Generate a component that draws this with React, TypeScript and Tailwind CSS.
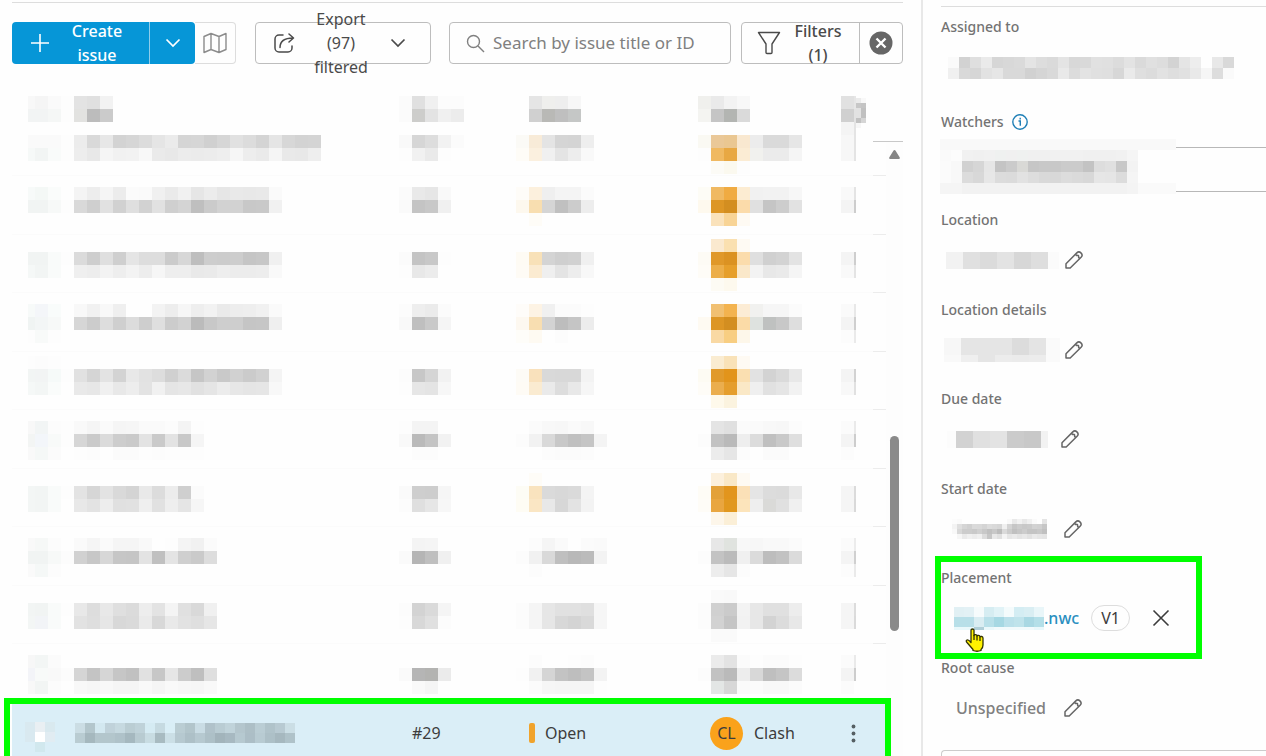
import type { ReactNode } from 'react';

interface MosaicProps {
  bands: string[];
  size?: number;
  clipLeft?: number;
  maxWidth?: number;
  maxHeight?: number;
  offset?: number;
  className?: string;
}

// Each band is a list of cells: two hex digits is a gray, six is a full colour, "-" is empty.
function Mosaic({ bands, size = 13, clipLeft = 0, maxWidth = 9999, maxHeight = 9999, offset = 0, className = '' }: MosaicProps) {
  const rows = bands.map((b) => b.split(' '));
  const width = Math.min(maxWidth, Math.max(...rows.map((r) => r.length)) * size - clipLeft);
  const height = Math.min(maxHeight, rows.length * size);
  return (
    <svg width={width} height={height} aria-hidden="true" shapeRendering="crispEdges" className={`block shrink-0 overflow-visible ${className}`}>
      {rows.map((cells, r) =>
        cells.map((c, i) => {
          if (c === '-') return null;
          const x = Math.max(0, i * size - clipLeft);
          const end = Math.min(width, (i + 1) * size - clipLeft);
          const y = r * size;
          return (
            <rect
              key={`${r}-${i}`}
              x={x}
              y={y + offset}
              width={Math.max(0, end - x)}
              height={Math.min(size, height - y)}
              fill={c.length === 2 ? `#${c}${c}${c}` : `#${c}`}
            />
          );
        })
      )}
    </svg>
  );
}

interface IssueRow {
  offset: number;
  check: string[];
  title: string[];
  id: string[];
  status: string[];
  type: string[];
  menu: string[];
}

const issues: IssueRow[] = [
  {
    offset: -6,
    check: ['fa fa fa fd', 'f6f9f8 f2f5f4 f9fbfa fd'],
    title: ['ec d9 e7 d3 d6 dc e5 eb d5 d6 d0 d6 e1 dc d4 e5 d7 d3 d4', 'ed e8 f5 f1 f2 f8 ea e8 ec eb ec ee f6 ed ea f5 e9 e8 ee'],
    id: ['f9 d6 dd f2 fb', 'fd f1 ea fd'],
    status: ['fbfaf6 f8ebd8 e4 d5 d4 ee', 'fefcf7 fbf0df f0 e4 ed f9'],
    type: ['faf9f3 eac898 eac792 f9e8d0 ec da da e6', 'fd f0b961 e8a843 fbecd4 f1f1ee eb eb f5', '- fcfbf6 fbf9ef fd'],
    menu: ['f7 e4', 'f7 e4'],
  },
  {
    offset: 11,
    check: ['f7faf9 f4f8f6 fafcfb fe', 'f1f4f3 f1f4f3 f7f9f8 fd'],
    title: ['f4 ed f5 ec fb fa f0 ea f1 e6 ec e6 e9 e8 e9 fa', 'd9 cf e1 d1 df d2 e1 cf d4 bf cb d2 d2 c8 c9 f1'],
    id: ['fb e9 e6 f9', 'fa c4 c8 f0'],
    status: ['fefcf8 fcf0dd ef f4 f4 fb', 'fdf8ee f8deb0 d5 c0 cc ed', '- fefcf7 fe'],
    type: ['fdfcf6 f0b962 f0ab42 fcecd2 f1 f2 f2 f7', 'fef9ee dd9625 d38e20 fbdbaa e0 c5 cd e2', '- fae2bb f8d496 fefaf3'],
    menu: ['f9 e4', 'f4 cd'],
  },
  {
    offset: 4,
    check: ['fe fe fe', 'f1f4f3 f1f4f3 f9fbfa fd', 'f5f8f7 f2f5f4 f9fbfa fe'],
    title: ['-', 'db ce df cf e5 dd dd cb d7 be cd cc cd c5 c7 f0', 'ef ed f3 ee f3 ed f6 ee ee e9 ea ee ec ec ed f9'],
    id: ['-', 'fb c4 c8 fd', 'fd e8 ec fe'],
    status: ['-', 'fefbf4 f8e1b8 d4 cf d1 f0', 'fefbf5 fbebd1 ef e4 ed f8'],
    type: ['- fae9cf fae0b0 fefaf3', 'fdfbf5 e09829 db9222 fbdcac df d0 d3 e3', 'fefcf7 ecae49 e69f2b fae8ca f3 e8 ea f5', '- fdfbf4 fdf9ee'],
    menu: ['-', 'f4 ce', 'f9 e4'],
  },
  {
    offset: 11,
    check: ['f7faf9 f4f6f9 f9fcfb fe', 'f0f4f3 f3f6f6 f7f9f8 fe', 'fd f8faf9 fd'],
    title: ['f8 f1 f8 ef fe fe f3 ed f6 ee f2 ea ed ee f1 fa', 'd6 cc dd cf dc ce df cc d2 bb c8 ce ce c5 c6 ef'],
    id: ['fc ee eb fb', 'f9 bf c9 f5'],
    status: ['fefcf9 fdf3e4 f0 fb fb fd', 'fdf8f0 f8deb1 d3 bd c5 ec', 'fefdf9 fefaf2 fe fc'],
    type: ['- f1c072 f3b34f fcecd5 f1f1ef f6 f6 fb', 'fefaf2 dd9625 d38e20 fbdba7 dee2df bfc1c0 c8 de', '- f9d9a4 f8ce82 fdf7ea'],
    menu: ['fa e8', 'f4 cf', 'fc ea'],
  },
  {
    offset: 4,
    check: ['fd fc fd', 'f2f5f4 f2f4f4 f6faf9 fd', 'f5f8f7 f3f6f5 fafcfb fe'],
    title: ['-', 'e1 d5 e3 d3 e8 e2 dd d0 db c6 d2 c9 d1 cb d1 f4', 'e9 e7 f0 e8 ed e3 f1 e5 e7 e1 e5 ec e7 e5 e6 f8'],
    id: ['-', 'fc c7 d5 f2', 'fd e6 e4 f7'],
    status: ['-', 'fdfbf6 f9e1bc d9 d8 d8 f3', 'fefbf5 faebd1 ea dd e8 f6'],
    type: ['- faecd1 f9e2b8 fefaf3', 'fdfbf3 e19a2b e2941b fadfb1 e2 d3 da e8', 'fefcf7 ebae4e e59e2d fae8c6 ef e1 e5 f2', '- fef9eb fbf3df'],
    menu: ['-', 'f4 d2', 'f8 e1'],
  },
  {
    offset: 11,
    check: ['f8 f2f5f5 fc fd', 'f3f5f4 f3f6fa f8faf9 fd', 'f9 f5f8f7 fb'],
    title: ['f9 f5 fa f5 f6 fa fa fc f4 fd', 'd6 ca db cd ca e3 ca e3 c8 f5', 'fd fc fe fb fb fd fc fd fd fd'],
    id: ['fd f4 f4', 'f9 ba c4 f2', '- fc fc'],
    status: ['- fb f8 f7 fa f8', 'fc f2 d9 c8 c0 c5 f4', '- fe fc fb fb fc'],
    type: ['- e4 e0 fb fa f8 f7 fc', 'fc c2 ba ee dc c0 c9 df', '- ec e6 fc fe fb fb'],
    menu: ['fb ea', 'f4 cd', 'fc'],
  },
  {
    offset: 4,
    check: ['-', 'f3f6f5 f2f5f4 f9fbfa fd', 'f3f6f5 f2f5f4 f9fbfa fe'],
    title: ['-', 'e3 d6 e3 d9 d4 e9 dc ec cf fb', 'e8 e3 ed e0 e1 ef e1 ee e5 f6'],
    id: ['-', 'fa ce cd f6', 'fc df e6 f7'],
    status: ['- fefcf7 fe fe', 'fdfcf5 f9e3be da d8 da f4', 'fefcf4 fae6c4 e8 d7 e3 f3'],
    type: ['- fcf0dc f9e8c7 fefaf3', 'fefcf6 e3a139 e2951d fbe0b7 e5 dc db e8', 'fefcf7 e9a640 e1981f fce4bb ee dadad8 e0 f0', '- fdf6ea fbefd7'],
    menu: ['-', 'f5 db', 'f5 d9'],
  },
  {
    offset: 11,
    check: ['f9 f6f8f7 fc', 'f1f4f3 f1f4f3 f7f9f8 fc', 'fa f5f8f7 fc'],
    title: ['fa f5 fa f5 f5 f9 fe fd f4 f1 fb', 'd1 c7 d7 c6 c5 e3 c0 e4 cf ca dd'],
    id: ['- f4 f5', 'fa b5 bf f0'],
    status: ['- fc f5 fa fe fb fa', 'fc f1 d9 bf b8 bb f3', '- fc fe'],
    type: ['- e7 e0e3df f8 f7 f9 f9 fb', 'fc c3 bb f0 db bd c2 db', '- ed e6 fc'],
    menu: ['fb ec', 'f4 d0', 'fc ea'],
  },
  {
    offset: 4,
    check: ['-', 'f2f5f4 f1f4f3 f9fbfa fd', 'f3f6f5 f2f4f7 f9fbfa fe'],
    title: ['-', 'e8 dd e8 df db ed e3 f4 e0 d9 f0', 'e2 de e6 d8 da ea d8 e9 e2 df e6'],
    id: ['-', 'fc d3 da f5', 'fd d8 e0 fc'],
    status: ['-', 'fc f5 e6 e1 e1 df f6', 'fc f5 e6 d8 d4 d9 f6'],
    type: ['- fa f9', 'fc d0 cb f3 e7 e0 e0 ed', 'fc d2 c5 f2 e7 d3 dc e8', '- fa fa'],
    menu: ['-', 'f5 dc', 'f5 da'],
  },
  {
    offset: 11,
    check: ['f7 f3f6f5 fb', 'f3f4f8 f8faf9 f9 fc', 'f8 f2f5f4 fc'],
    title: ['-', 'd5 c4 d6 c6 c1 e1 c7 e6 cc bf df', 'f8 f6 f8 f5 f5 f9 f5 f9 f7 f6 f9'],
    id: ['-', 'fa b5 b3b3b1 eb', '- f9 f5'],
    status: ['- fc fe fe fd fc', 'fd f1 d5 c3 be c4 f3', '- fb f6 f5 f5 f5 fd'],
    type: ['- eb e3 fb fd fb fb fd', 'fc c2 ba ed d8 bf c5 dc', '- e3e6e5 d7 fa fb f8 f8 fb'],
    menu: ['fb ea', 'f4 cd', 'fb'],
  },
];

function ChevronDown() {
  return (
    <svg width="16" height="10" viewBox="0 0 16 10" fill="none" stroke="currentColor" strokeWidth="1.7" aria-hidden="true" className="shrink-0">
      <path d="M1.5 1.5 8 8l6.500-6.500" />
    </svg>
  );
}

function Pencil({ label }: { label: string }) {
  return (
    <button type="button" aria-label={label} className="text-[#666]">
      <svg width="18" height="18" viewBox="0 0 18 18" fill="none" stroke="currentColor" strokeWidth="1.500" strokeLinejoin="round" aria-hidden="true">
        <path d="M1 17v-4.300L11.800 1.900a2.900 2.900 0 0 1 4.100 0l.2.200a2.900 2.900 0 0 1 0 4.100L5.200 17H1Z" />
        <path d="M10.800 3.200q.2 1.600 1.600 1.200 1.400-.2 1.200 1.200-.2 1.500 1.300 1.700" />
      </svg>
    </button>
  );
}

function Toolbar() {
  return (
    <div className="mt-[19px] flex h-[42px] items-stretch text-base leading-6 text-[#4a4a4a]">
      <div className="flex w-[224px] shrink-0">
        <button type="button" className="flex w-[138px] items-center rounded-l-sm border-r border-[#8fcdeb] bg-[#0696d7] pr-1 pl-[19px] font-medium text-white">
          <svg width="18" height="18" viewBox="0 0 18 18" stroke="currentColor" strokeWidth="1.6" aria-hidden="true" className="shrink-0">
            <path d="M9 0v18M0 9h18" />
          </svg>
          <span className="mx-auto w-14">Create issue</span>
        </button>
        <button type="button" aria-label="More create options" className="flex w-[45px] items-center justify-center rounded-r-sm bg-[#0696d7] text-white">
          <ChevronDown />
        </button>
        <button type="button" aria-label="Map view" className="flex flex-1 items-center justify-center rounded-r-sm border border-l-0 border-[#ddd] text-[#8c8c8c]">
          <svg width="24" height="22" viewBox="0 0 24 22" fill="none" stroke="currentColor" strokeWidth="1.4" strokeLinejoin="round" aria-hidden="true">
            <path d="m1 4.500 7-3 8 3 7-3v16l-7 3-8-3-7 3v-16ZM8 1.500v16M16 4.500v16" />
          </svg>
        </button>
      </div>

      <button type="button" className="ml-[19px] flex w-[176px] shrink-0 items-center border border-[#bdbdbd] rounded-sm pr-6 pl-[18px]">
        <svg width="21" height="20" viewBox="0 0 21 20" fill="none" stroke="currentColor" strokeWidth="1.500" strokeLinecap="round" strokeLinejoin="round" aria-hidden="true" className="shrink-0">
          <path d="M9 2H5a4 4 0 0 0-4 4v9a4 4 0 0 0 4 4h9a4 4 0 0 0 4-4v-2" />
          <path d="M6 14.500C6 9 9 5 19 5M15 1l4.500 4L15 9" />
        </svg>
        <span className="mr-auto ml-4 w-[60px]">Export (97) filtered</span>
        <ChevronDown />
      </button>

      <div className="ml-[18px] flex min-w-0 flex-1 items-center rounded-sm border border-[#bdbdbd] pl-4">
        <svg width="19" height="19" viewBox="0 0 19 19" fill="none" stroke="#808080" strokeWidth="1.400" aria-hidden="true" className="shrink-0">
          <circle cx="7.500" cy="7.500" r="6" />
          <path d="m12 12 6 6" />
        </svg>
        <input
          type="text"
          aria-label="Search by issue title or ID"
          placeholder="Search by issue title or ID"
          className="ml-2 min-w-0 flex-1 bg-transparent text-[17px] outline-none placeholder:text-[#808080]"
        />
      </div>

      <div className="ml-[10px] flex w-[162px] shrink-0 rounded-sm border border-[#bdbdbd]">
        <button type="button" className="flex flex-1 items-center pr-1 pl-[15px]">
          <svg width="24" height="24" viewBox="0 0 24 24" fill="none" stroke="currentColor" strokeWidth="1.400" strokeLinejoin="round" aria-hidden="true" className="shrink-0">
            <path d="M1.500 1.500h21L15 13v8.500q0 1-1 1h-4q-1 0-1-1V13L1.500 1.500Z" />
          </svg>
          <span className="mx-auto w-14 font-medium">Filters (1)</span>
        </button>
        <button type="button" aria-label="Clear filters" className="flex w-[43px] items-center justify-center border-l border-[#bdbdbd]">
          <svg width="24" height="24" viewBox="0 0 24 24" aria-hidden="true">
            <circle cx="12" cy="12" r="11.500" fill="#666" />
            <path d="m7.500 7.500 9 9m0-9-9 9" stroke="#fff" strokeWidth="2.400" />
          </svg>
        </button>
      </div>
    </div>
  );
}

function IssueTable() {
  return (
    <div className="mt-[18px] flex items-start">
      <table className="min-w-0 flex-1 table-fixed border-collapse text-left text-base text-[#3c3c3c]">
        <colgroup>
          <col className="w-[62px]" />
          <col />
          <col className="w-[117px]" />
          <col className="w-[182px]" />
          <col className="w-[143px]" />
          <col className="w-8" />
          <col className="w-[13px]" />
        </colgroup>
        <thead>
          <tr className="h-[59px] align-top">
            <th className="p-0 pl-4"><Mosaic clipLeft={6} offset={14} maxHeight={26} bands={['f8 f5 fa fd', 'f2f4f4 f2f4f4 f5f7f6 fd']} /></th>
            <th className="p-0"><Mosaic offset={14} bands={['e3 e0 f2', 'e2e2e0 bc cb']} /></th>
            <th className="p-0"><Mosaic offset={14} bands={['fb e0 f0 fc fc', 'fb cdcdcb e3 f0 ec']} /></th>
            <th className="p-0"><Mosaic offset={14} bands={['- e5 efefed ee f7', '- d0 b9b9b6 bf c5c7c6']} /></th>
            <th className="p-0"><Mosaic offset={14} bands={['f0f0ed ea f3 f8', 'f4f4f1 c5 b3b5b2 da']} /></th>
            <th className="p-0">
              <div className="flex">
                <Mosaic offset={14} maxWidth={15} bands={['e1 e6', 'd0 e2', 'f4 e4']} />
                <Mosaic size={5} offset={16} bands={['eb f8', 'c7 c4', 'e2 c0', 'e2 c0', 'c2 d5', 'f6']} />
              </div>
            </th>
            <th className="border-b border-[#c8c8c8] p-0" />
          </tr>
        </thead>
        <tbody>
          {issues.map((row, i) => (
            <tr
              key={i}
              className="h-[58px] border-b border-[#fbfbfb] align-top first:h-[34px] even:h-[59px]"
            >
              <td className="p-0 pl-4"><div className="h-0"><Mosaic clipLeft={6} offset={row.offset} bands={row.check} /></div></td>
              <td className="p-0"><div className="h-0"><Mosaic offset={row.offset} bands={row.title} /></div></td>
              <td className="p-0"><div className="h-0"><Mosaic offset={row.offset} bands={row.id} /></div></td>
              <td className="p-0"><div className="h-0"><Mosaic offset={row.offset} bands={row.status} /></div></td>
              <td className="p-0"><div className="h-0"><Mosaic offset={row.offset} bands={row.type} /></div></td>
              <td className="p-0"><div className="h-0"><Mosaic maxWidth={15} offset={row.offset} bands={row.menu} /></div></td>
              <td className="border-b border-[#ececec] p-0" />
            </tr>
          ))}
          <tr className="relative h-[62px] bg-[#daeef7]">
            <td className="p-0 pl-[13px]">
              <Mosaic size={10} bands={['d9e9f0 e9eff3 d9e9ef', 'd9e9f0 ffffff e1ecf2', '- d1e8ee']} className="mt-2" />
              <div className="pointer-events-none absolute -top-1 -right-[5px] -left-2 h-[80px] border-[6px] border-[#00ff00]" />
            </td>
            <td className="p-0 pl-px">
              <Mosaic
                size={10}
                bands={[
                  'cbdde4 b3c6cc d3e8f0 c0d2da c6d9e0 bacdd3 bfd2d9 d5ebf3 c6dae1 d9eef6 bacdd3 b2c5cb c9dce4 b0c2ca b9ccd3 c0d3da b4c6cd adbfc6 bacdd4 b0c3ca b8cad2 cbdee5',
                  'b9ccd2 a5b8be b3c6cc b3c6cc afc2c9 a5b8bf b8cbd1 c8dce2 a8bbc1 cbdfe6 b6c9d0 adc0c7 b6c9d0 adc0c7 a2b4bb a7b9c1 b6c9d0 acbec6 b8cbd2 adc0c7 a6b8bf afc2c9',
                ]}
              />
            </td>
            <td className="p-0 pl-[13px]">#29</td>
            <td className="p-0 pl-[13px]">
              <span className="flex items-center gap-[10px]">
                <span className="h-5 w-[6px] rounded-xs bg-[#f0a32c]" />
                Open
              </span>
            </td>
            <td className="p-0 pl-3">
              <span className="flex items-center gap-[11px]">
                <span className="flex size-[33px] items-center justify-center rounded-full bg-[#faa21b] text-[#3c3c3c]">CL</span>
                Clash
              </span>
            </td>
            <td className="p-0 pl-[10px]">
              <button type="button" aria-label="Issue actions" className="flex align-middle">
                <svg width="5" height="19" viewBox="0 0 5 19" fill="#555f63" aria-hidden="true">
                  <circle cx="2.500" cy="2.500" r="1.900" />
                  <circle cx="2.500" cy="9.500" r="1.900" />
                  <circle cx="2.500" cy="16.500" r="1.900" />
                </svg>
              </button>
            </td>
            <td className="p-0" />
          </tr>
        </tbody>
      </table>

      <div className="mt-[59px] flex h-[620px] w-[17px] shrink-0 flex-col items-center border-t border-[#c8c8c8] bg-[#fdfdfd]">
        <svg width="11" height="9" viewBox="0 0 11 9" fill="#858585" aria-hidden="true" className="mt-2">
          <path d="M5.500 0 Q6.200 0 6.600.700L10.800 7.500Q11 9 10 9H1Q0 9 .200 7.500L4.400.700Q4.800 0 5.500 0Z" />
        </svg>
        <div className="mt-[277px] h-[195px] w-[9px] rounded-full bg-[#8a8a8a]" />
      </div>
    </div>
  );
}

function Field({ label, children }: { label: string; children: ReactNode }) {
  return (
    <div className="relative h-[89px] odd:h-[90px]">
      <div className="text-sm leading-5 font-medium text-[#737373]">{label}</div>
      <div className="mt-[10px] flex h-10 items-center">{children}</div>
    </div>
  );
}

function DetailsPanel() {
  return (
    <aside className="w-[345px] shrink-0 overflow-hidden border-l-2 border-[#e8e8e8] pl-[18px]">
      <div className="mt-[6px] h-px bg-[#ddd]" />
      <div className="mt-[10px] h-[95px]">
        <div className="text-sm leading-5 font-medium text-[#737373]">Assigned to</div>
        <Mosaic
          size={11}
          className="mt-5 ml-[7px]"
          bands={[
            'fa d2 df ea d6 d8 da e4 dd da e4 d8 d9 e1 e0 dc e3 da e0 dd d3 e5 ed - e8 d9',
            'f0 d9 d6 e2 e6 d9 d9 d1 d5 d9 e9 dc e3 e0 df d7 ea df dc e2 de e1 e9 f6 dd fa',
          ]}
        />
      </div>
      <div className="h-[98px]">
        <div className="flex items-center gap-2 text-sm leading-5 font-medium text-[#737373]">
          <label htmlFor="watchers">Watchers</label>
          <svg width="16" height="16" viewBox="0 0 16 16" fill="none" stroke="#1f7fb6" strokeWidth="1.400" aria-hidden="true">
            <circle cx="8" cy="8" r="7.200" />
            <path d="M6.500 7H8.300v4.800M8.200 3.800v1.600" />
          </svg>
        </div>
        <div className="relative mt-[15px] h-[45px]">
          <input id="watchers" type="text" className="h-full w-full border-y border-l border-[#b8b8b8] outline-none" />
          <Mosaic
            size={11}
            maxWidth={236}
            className="pointer-events-none absolute -top-2 -left-px"
            bands={[
              'f9 f9 f9 f9 f9 f9 f9 f9 f9 f9 f9 f9 f9 f9 f9 f9 f9 f9 f9 f9 f9 f9',
              'fa fc f1 f0 f1 eff1f0 f0 eff1f0 f0 f0 f1 f1 f1 f0 f0 f0 f1 f5 fe fe fe fe',
              'fb f8 d1 d6 e6 c4 cb d9d9d6 c6 c8 c8 cb cb c3 dd e0 c8 f3 fe fe fe fe',
              'fb f8 dc d8 e7 dc db e2 dd d9 d8 dc da d8 e6 e5 dc f5 fe fe fe fe',
              'f5 f5 f2 f2 f2 f2 f2 f2 f2 f2 f2 f2 f2 f2 f2 f2 f2 f4 fa fa fa fa',
            ]}
          />
        </div>
      </div>

      <div>
        <Field label="Location">
          <Mosaic size={17} maxWidth={113} className="mr-[6px] ml-[5px]" bands={['f2 e0 db e3 d7 de fb']} />
          <Pencil label="Edit location" />
        </Field>
        <Field label="Location details">
          <Mosaic size={17} maxWidth={116} maxHeight={24} className="mr-[5px] ml-[3px]" bands={['f7 e5 e5 e5 dc e4 fa', 'f9 ef e5 ec eb ec fa']} />
          <Pencil label="Edit location details" />
        </Field>
        <Field label="Due date">
          <Mosaic size={17} clipLeft={8} maxWidth={101} className="mr-[13px] ml-[6px]" bands={['fc d2 e0 e3 cb c8 f2']} />
          <Pencil label="Edit due date" />
        </Field>
        <Field label="Start date">
          <Mosaic
            size={5}
            className="mr-[17px] ml-[11px]"
            bands={[
              'fc fa fe fe fe fe fe fe fe fe fe f9 e9 f2 e8 f0 fa fe e4',
              'f3 df d5 d0 da d9 d4 dc d9 d6 f0 d4 c6 cc c8 ca d2 d0 c6',
              'f8 d8 cc cc c9 d0 c8 c0 c8 bc da cc c0 c6 cc c4 c4 c8 c0',
              'fe f6 ea f0 ec f0 dc c6 e8 e0 f4 e6 ea e4 e8 e2 ea e6 e4',
            ]}
          />
          <Pencil label="Edit start date" />
        </Field>
        <Field label="Placement">
          <a href="#" className="ml-[13px] flex items-center text-base font-medium text-[#2a8fc0]">
            <Mosaic
              size={10}
              maxHeight={23}
              bands={[
                'e1f0f4 e3f1f5 f6fbfc d6edf2 e1f3f7 f4fbfc d4edf3 d9eef3 e9f6f9',
                'b8dfe8 b8dfe8 d9edf2 b8e0e9 a6d8e3 bae0ea bfe3eb a9d8e3 b4dfe8',
                'eaf8fb eaf8fb b0cfd8 eaf8fb f2fafc f2fafc f2fafc f2fafc eaf8fb',
              ]}
            />
            .nwc
          </a>
          <span className="ml-3 flex h-[26px] w-[39px] items-center justify-center rounded-full border border-[#ddd] text-base text-[#3c3c3c]">V1</span>
          <button type="button" aria-label="Remove placement" className="ml-[22px] text-[#3c3c3c]">
            <svg width="18" height="18" viewBox="0 0 18 18" stroke="currentColor" strokeWidth="1.600" aria-hidden="true">
              <path d="m1.500 1.500 15 15m0-15-15 15" />
            </svg>
          </button>
          <svg width="20" height="24" viewBox="0 0 20 24" fill="#fff200" stroke="#333300" strokeWidth="1.300" strokeLinejoin="round" aria-hidden="true" className="absolute top-[60px] left-6">
            <path d="M6 13.500V2.300Q6 1 7.500 1T9 2.300V7.500Q9 6.500 10.500 6.600T12 8Q12.200 7.200 13.500 7.400T15 8.800Q15.500 8.200 16.700 8.500T18 10V17Q18 20 16 21.500V22.500Q12 24 8 22.500V21.500L2 14.500Q.500 12.500 2 12T6 14.500Z" />
            <path d="M9 7v5M12 8v4.500M15 9v4" fill="none" />
          </svg>
          <div className="pointer-events-none absolute -top-3 -left-[6px] h-[103px] w-[267px] border-[6px] border-[#00ff00]" />
        </Field>
        <Field label="Root cause">
          <span className="mr-[18px] ml-[15px] text-base font-medium text-[#808080]">Unspecified</span>
          <Pencil label="Edit root cause" />
        </Field>
      </div>
      <div className="mt-[3px] h-20 rounded-tl-sm border-t border-l border-[#ccc]" />
    </aside>
  );
}

export default function App() {
  return (
    <div className="flex h-screen overflow-hidden bg-[#fefefe] font-['Noto_Sans',sans-serif]">
      <main className="min-w-0 flex-1 overflow-hidden pr-[18px] pl-3">
        <div className="mt-[2px] h-px bg-[#ddd]" />
        <Toolbar />
        <IssueTable />
      </main>
      <DetailsPanel />
    </div>
  );
}
